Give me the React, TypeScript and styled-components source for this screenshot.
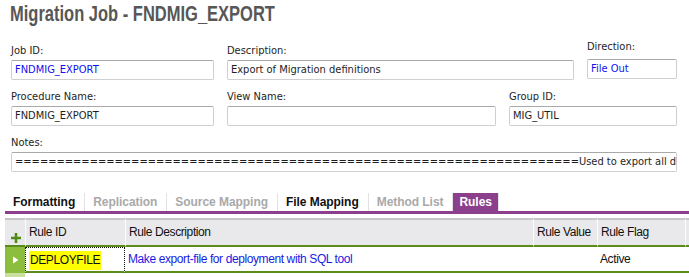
import React from 'react';
import styled, { createGlobalStyle } from 'styled-components';

const GlobalStyle = createGlobalStyle`
  html, body {
    margin: 0;
    padding: 0;
    background: #ffffff;
  }
  * {
    box-sizing: border-box;
  }
`;

const formFont = `"DejaVu Sans Condensed", "Noto Sans", sans-serif`;
const gridFont = `"Liberation Sans", Arial, sans-serif`;

const Page = styled.div`
  width: 689px;
  height: 277px;
  overflow: hidden;
  font-family: ${formFont};
`;

const Title = styled.h1`
  margin: 0;
  padding: 2px 0 0 10px;
  height: 44px;
  font-family: "Liberation Sans", Arial, sans-serif;
  font-weight: bold;
  font-size: 22px;
  line-height: 24px;
  color: #575757;
  white-space: nowrap;
  transform: scaleX(0.75);
  transform-origin: 10px 0;
`;

const Form = styled.div`
  display: flex;
  flex-direction: column;
  gap: 10px;
  padding: 0 12px 0 11px;
`;

const FieldRow = styled.div`
  display: flex;
  gap: 13px;
`;

const Field = styled.div<{ $width?: number; $lift?: number }>`
  display: flex;
  flex-direction: column;
  min-width: 0;
  width: ${(p) => (p.$width ? `${p.$width}px` : 'auto')};
  flex: ${(p) => (p.$width ? 'none' : '1')};
  margin-top: ${(p) => (p.$lift ? `-${p.$lift}px` : '0')};
`;

const Label = styled.label<{ $gap?: number }>`
  font-size: 11px;
  line-height: 13px;
  color: #1e1e1e;
  margin-bottom: ${(p) => (p.$gap ?? 3)}px;
  white-space: nowrap;
`;

const Input = styled.div<{ $blue?: boolean }>`
  height: 20px;
  padding: 0 3px;
  border: 1px solid #cfcfcf;
  border-top-color: #a9a9a9;
  border-radius: 2px;
  background: #fff;
  font-size: 11px;
  line-height: 18px;
  color: ${(p) => (p.$blue ? '#1010f0' : '#1e1e1e')};
  white-space: nowrap;
  overflow: hidden;
`;

const TabSection = styled.div`
  margin: 21px 0 0 5px;
`;

const TabBar = styled.div`
  display: flex;
  border-bottom: 3px solid #8b3f8d;
`;

const Tab = styled.div<{ $state: 'on' | 'off' | 'active' }>`
  height: 18px;
  padding: ${(p) => (p.$state === 'active' ? '0 6px' : '0 9px 0 8px')};
  border-right: 1px solid #e2e2e2;
  font-family: ${gridFont};
  font-weight: bold;
  font-size: 12px;
  letter-spacing: -0.05px;
  line-height: 19px;
  white-space: nowrap;
  color: ${(p) => (p.$state === 'off' ? '#a9a9a9' : p.$state === 'active' ? '#ffffff' : '#111')};
  background: ${(p) => (p.$state === 'active' ? '#8b3f8d' : '#fff')};
`;

const Grid = styled.div`
  margin-top: 4px;
  display: grid;
  grid-template-columns: 20px 100px 408px 64px 88px 1fr;
  font-family: ${gridFont};
  font-size: 12px;
  letter-spacing: -0.4px;
`;

const HeadCell = styled.div`
  height: 29px;
  background: #e9e9eb;
  border-top: 2px solid #c6c6c6;
  border-bottom: 2px solid #5c8a1c;
  border-left: 1px solid #fbfbfb;
  padding: 5px 3px 0;
  color: #111;
  white-space: nowrap;
  &:first-child {
    border-left: none;
  }
`;

const AddIcon = styled.svg`
  display: block;
  margin: 7px 0 0 2px;
`;

const RowHandle = styled.div<{ $pale?: boolean }>`
  height: ${(p) => (p.$pale ? '10px' : '26px')};
  background: ${(p) => (p.$pale ? '#c9df9f' : '#8dbd3d')};
  display: flex;
  align-items: center;
  justify-content: center;
`;

const Cell = styled.div<{ $focus?: boolean; $blue?: boolean }>`
  height: 26px;
  border: ${(p) => (p.$focus ? '1px dotted #111' : 'none')};
  border-bottom: 2px solid #5c8a1c;
  padding: 0 3px;
  line-height: 24px;
  color: ${(p) => (p.$blue ? '#1a1ae6' : '#111')};
  white-space: nowrap;
  overflow: hidden;
`;

const Highlight = styled.span`
  background: #ffff00;
  padding: 2px 1px 3px;
`;

const EmptyCell = styled.div`
  height: 10px;
`;

const fieldsTop = [
  { label: 'Job ID:', value: 'FNDMIG_EXPORT', width: 203, blue: true },
  { label: 'Description:', value: 'Export of Migration definitions', width: 347 },
  { label: 'Direction:', value: 'File Out', width: 90, blue: true, lift: 4, gap: 6 },
];

const fieldsMid = [
  { label: 'Procedure Name:', value: 'FNDMIG_EXPORT', width: 203 },
  { label: 'View Name:', value: '', width: 269 },
  { label: 'Group ID:', value: 'MIG_UTIL', width: 168 },
];

const tabs: { name: string; state: 'on' | 'off' | 'active' }[] = [
  { name: 'Formatting', state: 'on' },
  { name: 'Replication', state: 'off' },
  { name: 'Source Mapping', state: 'off' },
  { name: 'File Mapping', state: 'on' },
  { name: 'Method List', state: 'off' },
  { name: 'Rules', state: 'active' },
];

const notes = '='.repeat(68) + 'Used to export all data needed to deploy migration jobs';

const App = () => {
  return (
    <Page>
      <GlobalStyle />
      <Title>Migration Job - FNDMIG_EXPORT</Title>
      <Form>
        <FieldRow>
          {fieldsTop.map((f) => (
            <Field key={f.label} $width={f.width} $lift={f.lift}>
              <Label $gap={f.gap}>{f.label}</Label>
              <Input $blue={f.blue}>{f.value}</Input>
            </Field>
          ))}
        </FieldRow>
        <FieldRow>
          {fieldsMid.map((f) => (
            <Field key={f.label} $width={f.width}>
              <Label>{f.label}</Label>
              <Input>{f.value}</Input>
            </Field>
          ))}
        </FieldRow>
        <FieldRow>
          <Field>
            <Label>Notes:</Label>
            <Input>{notes}</Input>
          </Field>
        </FieldRow>
      </Form>
      <TabSection>
        <TabBar>
          {tabs.map((t) => (
            <Tab key={t.name} $state={t.state}>
              {t.name}
            </Tab>
          ))}
        </TabBar>
        <Grid>
          <HeadCell>
            <AddIcon width="12" height="12" viewBox="0 0 12 12">
              <path d="M6 1v10M1 6h10" stroke="#4f8a16" strokeWidth="2.6" />
            </AddIcon>
          </HeadCell>
          <HeadCell>Rule ID</HeadCell>
          <HeadCell>Rule Description</HeadCell>
          <HeadCell>Rule Value</HeadCell>
          <HeadCell>Rule Flag</HeadCell>
          <HeadCell />

          <RowHandle>
            <svg width="7" height="8" viewBox="0 0 7 8">
              <path d="M1 0.5L6.5 4L1 7.5Z" fill="#ffffff" />
            </svg>
          </RowHandle>
          <Cell $focus>
            <Highlight>DEPLOYFILE</Highlight>
          </Cell>
          <Cell $blue>Make export-file for deployment with SQL tool</Cell>
          <Cell />
          <Cell>Active</Cell>
          <Cell />

          <RowHandle $pale />
          <EmptyCell />
        </Grid>
      </TabSection>
    </Page>
  );
};

export default App;
